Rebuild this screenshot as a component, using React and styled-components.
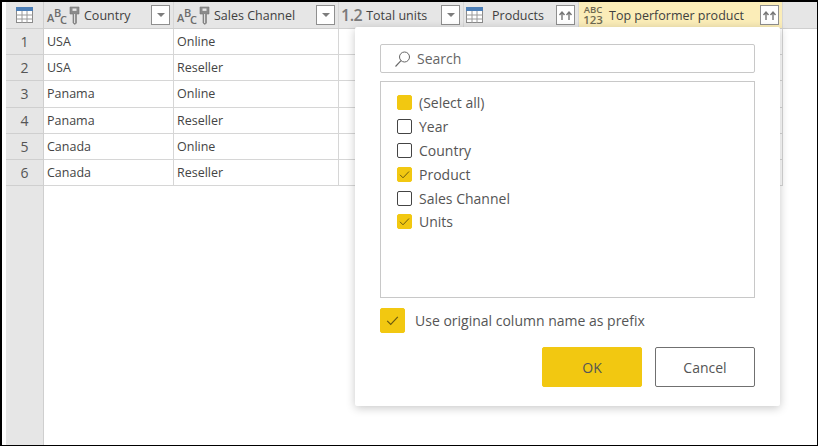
import React from "react";
import styled, { createGlobalStyle } from "styled-components";

const GlobalStyle = createGlobalStyle`
  html, body { margin: 0; padding: 0; background: #fff; }
  * { box-sizing: border-box; }
`;

const FONT = `"Open Sans", "Noto Sans", "Liberation Sans", sans-serif`;
const YELLOW = "#f2c811";
const COLUMNS = "130px 165px 125px 115px 204px";

const Frame = styled.div`
  position: relative;
  width: 818px;
  height: 446px;
  overflow: hidden;
  display: flex;
  flex-direction: column;
  background: #fff;
  border: solid #000;
  border-width: 2px 1px 1px 2px;
  padding-left: 4px;
  font-family: ${FONT};
  color: #444;
`;

const HeaderBar = styled.div`
  display: flex;
  flex: none;
  height: 27px;
  background: #e6e6e6;
  border-bottom: 1px solid #cfcfcf;
`;

const Corner = styled.div`
  flex: none;
  width: 38px;
  display: flex;
  align-items: center;
  justify-content: center;
  border-right: 1px solid #cfcfcf;
`;

const HeaderGrid = styled.div`
  display: grid;
  grid-template-columns: ${COLUMNS};
`;

const HeaderCell = styled.div`
  display: flex;
  align-items: center;
  height: 26px;
  padding: 0 3px 0 2px;
  border-right: 1px solid #d6d6d6;
  background: ${(props) => (props.$active ? "#fbedb8" : "transparent")};
`;

const HeaderLabel = styled.span`
  flex: 1;
  font-size: 12.5px;
  font-weight: 400;
  color: #3f3f3f;
  white-space: nowrap;
  padding-left: ${(props) => props.$indent || 4}px;
`;

const BoxButton = styled.span`
  flex: none;
  width: 19px;
  height: 20px;
  display: flex;
  align-items: center;
  justify-content: center;
  background: #fff;
  border: 1px solid #8f8f8f;
`;

const Caret = styled.span`
  width: 0;
  height: 0;
  border-left: 4px solid transparent;
  border-right: 4px solid transparent;
  border-top: 4px solid #7d7d7d;
`;

const TypeAbc = styled.span`
  position: relative;
  flex: none;
  width: 23px;
  height: 20px;
  color: #6b6b6b;
  font-weight: 600;
`;

const TypeLetter = styled.span`
  position: absolute;
  left: ${(props) => props.$x}px;
  top: ${(props) => props.$y}px;
  font-size: 11px;
  line-height: 11px;
`;

const TypeNumber = styled.span`
  flex: none;
  font-size: 16px;
  font-weight: 600;
  color: #7a7a7a;
  letter-spacing: -0.5px;
`;

const TypeStack = styled.span`
  flex: none;
  display: flex;
  flex-direction: column;
  align-items: center;
  width: 24px;
  font-weight: 600;
  color: #6f6a52;
  line-height: 10px;
`;

const StackTop = styled.span`
  font-size: 9.5px;
  letter-spacing: 0;
`;

const StackBottom = styled.span`
  font-size: 11.5px;
`;

const Body = styled.div`
  flex: 1;
  display: flex;
  min-height: 0;
`;

const Gutter = styled.div`
  flex: none;
  width: 38px;
  display: flex;
  flex-direction: column;
  background: #e6e6e6;
  border-right: 1px solid #cfcfcf;
`;

const GutterCell = styled.div`
  height: 26.2px;
  display: flex;
  align-items: center;
  justify-content: center;
  font-size: 14px;
  color: #555;
  border-bottom: 1px solid #cfcfcf;
`;

const Rows = styled.div`
  display: flex;
  flex-direction: column;
`;

const Row = styled.div`
  display: grid;
  grid-template-columns: ${COLUMNS};
  height: 26.2px;
  border-bottom: 1px solid #d6d6d6;
`;

const Cell = styled.div`
  display: flex;
  align-items: center;
  padding-left: 3px;
  font-size: 12.5px;
  color: #444;
  border-right: 1px solid #d6d6d6;
`;

const Dialog = styled.div`
  position: absolute;
  left: 353px;
  top: 25px;
  width: 425px;
  height: 379px;
  display: flex;
  flex-direction: column;
  padding: 17px 25px 0;
  background: #fff;
  border-radius: 2px;
  box-shadow: 0 2px 10px rgba(0, 0, 0, 0.22);
`;

const SearchBox = styled.div`
  flex: none;
  height: 29px;
  display: flex;
  align-items: center;
  gap: 5px;
  padding-left: 13px;
  border: 1px solid #c8c8c8;
  border-radius: 2px;
  font-size: 14px;
  color: #666;
`;

const ListBox = styled.div`
  flex: none;
  height: 217px;
  margin-top: 8px;
  padding: 9px 16px;
  display: flex;
  flex-direction: column;
  border: 1px solid #c8c8c8;
`;

const ListItem = styled.div`
  height: 23.8px;
  display: flex;
  align-items: center;
  gap: 7px;
  font-size: 14px;
  color: #555;
`;

const CheckBox = styled.span`
  flex: none;
  width: ${(props) => props.$size || 15}px;
  height: ${(props) => props.$size || 15}px;
  display: flex;
  align-items: center;
  justify-content: center;
  border-radius: 2px;
  background: ${(props) => (props.$on ? YELLOW : "#fff")};
  border: 1px solid ${(props) => (props.$on ? YELLOW : "#444")};
`;

const PrefixRow = styled.div`
  flex: none;
  display: flex;
  align-items: center;
  gap: 10px;
  margin-top: 10px;
  font-size: 14px;
  color: #555;
`;

const Actions = styled.div`
  display: flex;
  justify-content: flex-end;
  gap: 13px;
  margin-top: 14px;
`;

const ActionButton = styled.button`
  width: ${(props) => (props.$primary ? 100 : 100)}px;
  height: 40px;
  font-family: ${FONT};
  font-size: 14px;
  color: #555;
  border-radius: 2px;
  background: ${(props) => (props.$primary ? YELLOW : "#fff")};
  border: 1px solid ${(props) => (props.$primary ? YELLOW : "#707070")};
`;

const TableIcon = () => (
  <svg width="17" height="16" viewBox="0 0 17 16">
    <rect x="0.5" y="0.5" width="16" height="15" fill="#fff" stroke="#8a8a8a" />
    <rect x="0" y="0" width="17" height="4" fill="#4c7fb8" />
    <path d="M0.5 8h16M0.5 12h16M6 4v12M11 4v12" stroke="#9a9a9a" fill="none" />
  </svg>
);

const KeyIcon = () => (
  <svg width="11" height="19" viewBox="0 0 11 19" style={{ flex: "none" }}>
    <path d="M1 1h9v7H7.5v9l-1.5 1.5L4 17V8H1z" fill="#8b8b8b" stroke="#777" strokeWidth="0.6" />
    <rect x="3.5" y="2.5" width="4" height="2.4" fill="#e6e6e6" />
    <path d="M5.6 8v9" stroke="#e6e6e6" />
  </svg>
);

const CheckMark = ({ size = 11 }) => (
  <svg width={size} height={size} viewBox="0 0 11 11">
    <path d="M1 5.8l3 3L10 2.5" fill="none" stroke="#6b5a10" strokeWidth="1" />
  </svg>
);

const SearchIcon = () => (
  <svg width="18" height="18" viewBox="0 0 18 18">
    <circle cx="10.5" cy="7" r="5" fill="none" stroke="#666" />
    <path d="M7 10.7L1.5 16.5" stroke="#666" strokeWidth="1.1" />
  </svg>
);

const ExpandIcon = () => (
  <svg width="15" height="12" viewBox="0 0 15 12">
    <path
      d="M4 11V4M1.5 6L4 3l2.5 3M11 11V4M8.5 6L11 3l2.5 3"
      fill="none"
      stroke="#777"
      strokeWidth="1.4"
    />
  </svg>
);

const AbcType = () => (
  <TypeAbc>
    <TypeLetter $x={1} $y={7}>A</TypeLetter>
    <TypeLetter $x={8} $y={2}>B</TypeLetter>
    <TypeLetter $x={14} $y={9}>C</TypeLetter>
  </TypeAbc>
);

const ROWS = [
  ["USA", "Online"],
  ["USA", "Reseller"],
  ["Panama", "Online"],
  ["Panama", "Reseller"],
  ["Canada", "Online"],
  ["Canada", "Reseller"],
];

const FIELDS = [
  { name: "(Select all)", on: true, mixed: true },
  { name: "Year" },
  { name: "Country" },
  { name: "Product", on: true },
  { name: "Sales Channel" },
  { name: "Units", on: true },
];

const App = () => {
  return (
    <Frame>
      <GlobalStyle />
      <HeaderBar>
        <Corner>
          <TableIcon />
        </Corner>
        <HeaderGrid>
          <HeaderCell>
            <AbcType />
            <KeyIcon />
            <HeaderLabel>Country</HeaderLabel>
            <BoxButton><Caret /></BoxButton>
          </HeaderCell>
          <HeaderCell>
            <AbcType />
            <KeyIcon />
            <HeaderLabel>Sales Channel</HeaderLabel>
            <BoxButton><Caret /></BoxButton>
          </HeaderCell>
          <HeaderCell>
            <TypeNumber>1.2</TypeNumber>
            <HeaderLabel>Total units</HeaderLabel>
            <BoxButton><Caret /></BoxButton>
          </HeaderCell>
          <HeaderCell>
            <TableIcon />
            <HeaderLabel $indent={9}>Products</HeaderLabel>
            <BoxButton><ExpandIcon /></BoxButton>
          </HeaderCell>
          <HeaderCell $active>
            <TypeStack>
              <StackTop>ABC</StackTop>
              <StackBottom>123</StackBottom>
            </TypeStack>
            <HeaderLabel>Top performer product</HeaderLabel>
            <BoxButton><ExpandIcon /></BoxButton>
          </HeaderCell>
        </HeaderGrid>
      </HeaderBar>
      <Body>
        <Gutter>
          {ROWS.map((row, i) => (
            <GutterCell key={i}>{i + 1}</GutterCell>
          ))}
        </Gutter>
        <Rows>
          {ROWS.map((row, i) => (
            <Row key={i}>
              <Cell>{row[0]}</Cell>
              <Cell>{row[1]}</Cell>
              <Cell />
              <Cell />
              <Cell />
            </Row>
          ))}
        </Rows>
      </Body>
      <Dialog>
        <SearchBox>
          <SearchIcon />
          Search
        </SearchBox>
        <ListBox>
          {FIELDS.map((field) => (
            <ListItem key={field.name}>
              <CheckBox $on={field.on}>
                {field.on && !field.mixed && <CheckMark />}
              </CheckBox>
              {field.name}
            </ListItem>
          ))}
        </ListBox>
        <PrefixRow>
          <CheckBox $on $size={25}>
            <CheckMark size={13} />
          </CheckBox>
          Use original column name as prefix
        </PrefixRow>
        <Actions>
          <ActionButton $primary>OK</ActionButton>
          <ActionButton>Cancel</ActionButton>
        </Actions>
      </Dialog>
    </Frame>
  );
};

export default App;
